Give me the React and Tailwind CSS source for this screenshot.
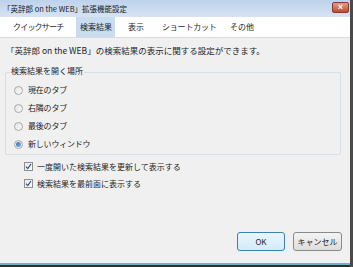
const FONT = { fontFamily: '"Noto Sans CJK JP", "Liberation Sans", sans-serif' }

function Radio({ checked, label }) {
  return (
    <div className="flex items-center h-[18px] pl-[8px]">
      <div className="w-[9px] h-[9px] rounded-full border border-[#a8a8a8] bg-gradient-to-br from-[#e4e4e4] to-[#fafafa] flex items-center justify-center">
        {checked && <div className="w-[5px] h-[5px] rounded-full bg-gradient-to-br from-[#2d6fb5] to-[#7fb3e6]" />}
      </div>
      <span className="ml-[5px] text-[8px] leading-none text-[#1e1e1e] tracking-[-0.2px]">{label}</span>
    </div>
  )
}

function Check({ label }) {
  return (
    <div className="flex items-center h-[17px] pl-[19px]">
      <div className="w-[9px] h-[9px] border border-[#8e8f8f] bg-gradient-to-br from-[#e6e6e6] to-[#ffffff] flex items-center justify-center">
        <svg width="7" height="7" viewBox="0 0 7 7">
          <path d="M1 3.6 L2.8 5.6 L6 1" fill="none" stroke="#2a4f8a" strokeWidth="1.2" />
        </svg>
      </div>
      <span className="ml-[4px] text-[8px] leading-none text-[#1e1e1e]">{label}</span>
    </div>
  )
}

export default function App() {
  return (
    <div className="w-[353px] h-[267px] flex flex-col overflow-hidden bg-[#f0f0f0] border-r-[3px] border-[#4a4a4a]" style={FONT}>
      {/* タイトルバー */}
      <div className="h-[17px] flex items-center justify-between pl-[3px] pr-[1px] bg-gradient-to-b from-[#bfd2ec] to-[#d6e3f3]">
        <span className="text-[7.5px] leading-none text-[#1a1a1a]">「英辞郎 on the WEB」拡張機能設定</span>
        <div className="w-[17px] h-[11px] mt-[-2px] rounded-[2px] border border-[#8a3a2a] bg-gradient-to-b from-[#e59b84] to-[#c4472d] flex items-center justify-center">
          <span className="text-[9px] leading-none text-white font-bold" style={{ fontFamily: '"Liberation Sans", sans-serif' }}>×</span>
        </div>
      </div>

      {/* タブ */}
      <div className="h-[21px] flex items-stretch bg-white border-b border-[#dcdcdc] pl-[4px] text-[8px] leading-none text-[#1e1e1e]">
        <div className="w-[72px] pl-[9px] flex items-center tracking-[-0.8px]">クイックサーチ</div>
        <div className="w-[39px] pl-[4px] flex items-center bg-[#c9dcf0]">検索結果</div>
        <div className="w-[40px] pl-[13px] flex items-center">表示</div>
        <div className="w-[75px] pl-[7px] flex items-center tracking-[-0.2px]">ショートカット</div>
        <div className="pl-[0px] flex items-center">その他</div>
      </div>

      {/* 本文 */}
      <div className="flex-1 flex flex-col px-[5px] pt-[6px]">
        <p className="text-[8.5px] leading-[12px] text-[#1e1e1e] pl-[1px]">「英辞郎 on the WEB」の検索結果の表示に関する設定ができます。</p>

        <div className="relative mt-[16px] mr-[4px] h-[83px] border border-[#d5dfe5] rounded-[2px] pt-[8px]">
          <span className="absolute left-[4px] top-[-6px] px-[1px] bg-[#f0f0f0] text-[8px] leading-none text-[#1e1e1e]">検索結果を開く場所</span>
          <Radio label="現在のタブ" />
          <Radio label="右隣のタブ" />
          <Radio label="最後のタブ" />
          <Radio label="新しいウィンドウ" checked />
        </div>

        <div className="mt-[3px]">
          <Check label="一度開いた検索結果を更新して表示する" />
          <Check label="検索結果を最前面に表示する" />
        </div>

        <div className="flex-1" />
        <div className="flex justify-end gap-[8px] pr-[3px] pb-[12px]">
          <button className="w-[48px] h-[19px] rounded-[3px] border border-[#3c7fb1] bg-gradient-to-b from-[#eaf6fd] to-[#d3ebf8] text-[8px] leading-none text-[#1e1e1e]">OK</button>
          <button className="w-[49px] h-[19px] rounded-[3px] border border-[#8a8a8a] bg-gradient-to-b from-[#f4f4f4] to-[#dddddd] text-[8px] leading-none text-[#1e1e1e]">キャンセル</button>
        </div>
      </div>

      <div className="h-[2px] bg-[#6fb0cc]" />
      <div className="h-[2px] bg-[#2e2e2e]" />
    </div>
  )
}
